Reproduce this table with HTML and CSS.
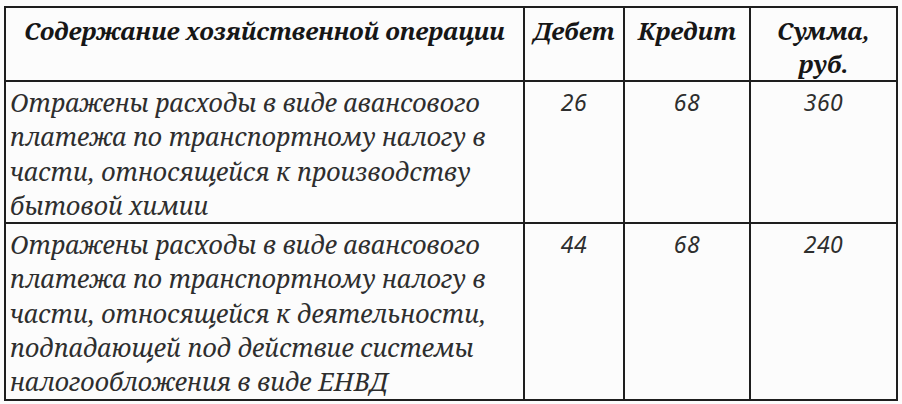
FILE: index.html
```html
<!DOCTYPE html>
<html lang="ru">
<head>
<meta charset="utf-8">
<link rel="stylesheet" href="styles.css">
</head>
<body>
<table class="ops">
  <colgroup>
    <col class="c-desc">
    <col class="c-deb">
    <col class="c-cred">
    <col class="c-sum">
  </colgroup>
  <thead>
    <tr class="head-row">
      <th>Содержание хозяйственной операции</th>
      <th>Дебет</th>
      <th>Кредит</th>
      <th>Сумма,<br>руб.</th>
    </tr>
  </thead>
  <tbody>
    <tr class="row-1">
      <td class="desc">Отражены расходы в виде авансового<br>платежа по транспортному налогу в<br>части, относящейся к производству<br>бытовой химии</td>
      <td class="num">26</td>
      <td class="num">68</td>
      <td class="num">360</td>
    </tr>
    <tr class="row-2">
      <td class="desc">Отражены расходы в виде авансового<br>платежа по транспортному налогу в<br>части, относящейся к деятельности,<br>подпадающей под действие системы<br>налогообложения в виде ЕНВД</td>
      <td class="num">44</td>
      <td class="num">68</td>
      <td class="num">240</td>
    </tr>
  </tbody>
</table>
</body>
</html>
```

FILE: styles.css
```css
html, body {
  margin: 0;
  padding: 0;
  background: #fcfcfc;
}

.ops {
  margin: 6px 0 0 4px;
  border-collapse: collapse;
  table-layout: fixed;
  width: 892px;
  font-family: "Noto Serif", "DejaVu Serif", serif;
  font-style: italic;
  color: #2e2e2e;
}

.c-desc { width: 519px; }
.c-deb { width: 100px; }
.c-cred { width: 126px; }
.c-sum { width: 147px; }

.ops th,
.ops td {
  border: 2px solid #1e1e1e;
  vertical-align: top;
  padding: 0;
  white-space: nowrap;
}

.ops th {
  font-weight: bold;
  color: #161616;
  font-size: 24px;
  line-height: 33px;
  padding-top: 6px;
  text-align: center;
}

.head-row { height: 74px; }
.row-1 { height: 140px; }
.row-2 { height: 176px; }

.ops td {
  font-size: 25px;
  line-height: 34.3px;
  padding-top: 3px;
}

.desc {
  text-align: left;
  padding-left: 4px !important;
}

.num {
  text-align: center;
  font-family: "Noto Sans", "DejaVu Sans", sans-serif;
  font-size: 23px !important;
  letter-spacing: 0.5px;
}
```
